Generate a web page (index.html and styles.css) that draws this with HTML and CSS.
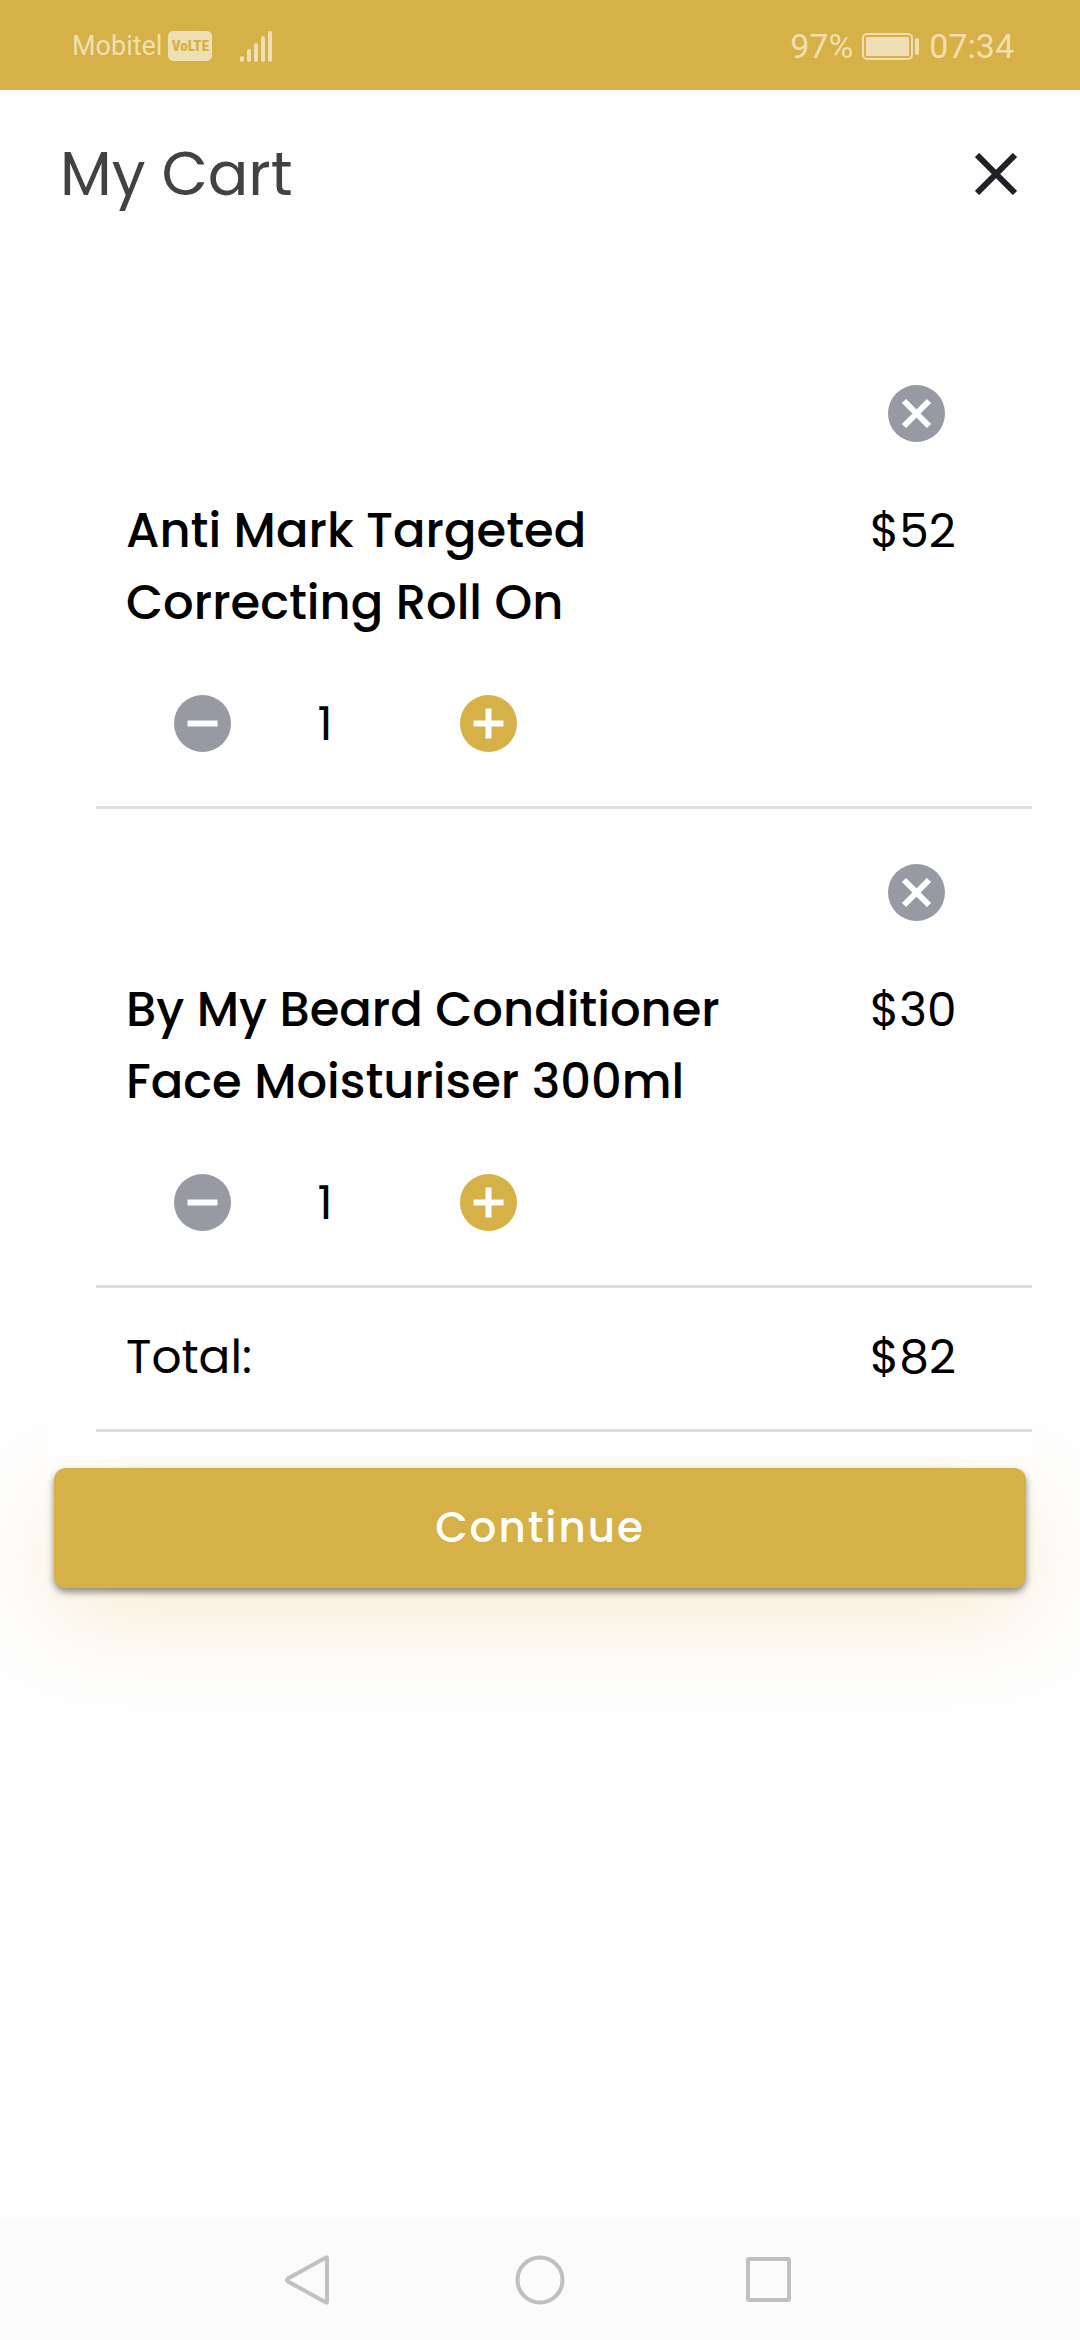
FILE: index.html
```html
<!DOCTYPE html>
<html lang="en">
<head>
<meta charset="utf-8">
<meta name="viewport" content="width=device-width, initial-scale=1">
<title>My Cart</title>
<link rel="stylesheet" href="styles.css">
</head>
<body>
<div class="status-bar">
  <div class="status-group">
    <span class="carrier">Mobitel</span>
    <span class="volte">VoLTE</span>
    <svg class="signal" width="32" height="31" viewBox="0 0 32 31" aria-hidden="true">
      <rect x="0" y="25" width="4" height="6" rx="2"/>
      <rect x="7" y="18" width="4" height="13" rx="2"/>
      <rect x="14" y="12" width="4" height="19" rx="2"/>
      <rect x="21" y="5" width="4" height="26" rx="2"/>
      <rect x="28" y="0" width="4" height="31" rx="2"/>
    </svg>
  </div>
  <div class="status-group status-right">
    <span>97%</span>
    <svg width="58" height="27" viewBox="0 0 58 27" aria-hidden="true">
      <rect class="battery-shell" x="1" y="1" width="49" height="25" rx="4"/>
      <rect x="4" y="4" width="43" height="19" rx="1"/>
      <rect x="53" y="5" width="4" height="17" rx="2"/>
    </svg>
    <span>07:34</span>
  </div>
</div>

<header class="header">
  <h1 class="title">My Cart</h1>
  <button class="icon-button close" type="button" aria-label="Close">
    <svg width="42" height="42" viewBox="0 0 42 42"><path d="M2 2L40 40M40 2L2 40"/></svg>
  </button>
</header>

<main class="main">
  <div class="cart">
    <ul class="items">
      <li class="item">
        <button class="icon-button remove" type="button" aria-label="Remove Anti Mark Targeted Correcting Roll On">
          <svg width="57" height="57" viewBox="0 0 57 57"><circle class="disc" cx="28.500" cy="28.500" r="28.500"/><path d="M16 16L41 41M41 16L16 41"/></svg>
        </button>
        <h2 class="name">Anti Mark Targeted Correcting Roll On</h2>
        <span class="price">$52</span>
        <div class="quantity">
          <button class="icon-button" type="button" aria-label="Decrease quantity">
            <svg width="57" height="57" viewBox="0 0 57 57"><circle class="disc" cx="28.500" cy="28.500" r="28.500"/><path d="M13.500 28.500H43.500"/></svg>
          </button>
          <output class="count">1</output>
          <button class="icon-button add" type="button" aria-label="Increase quantity">
            <svg width="57" height="57" viewBox="0 0 57 57"><circle class="disc" cx="28.500" cy="28.500" r="28.500"/><path d="M13.500 28.500H43.500M28.500 13.500V43.500"/></svg>
          </button>
        </div>
      </li>
      <li class="item">
        <button class="icon-button remove" type="button" aria-label="Remove By My Beard Conditioner Face Moisturiser 300ml">
          <svg width="57" height="57" viewBox="0 0 57 57"><circle class="disc" cx="28.500" cy="28.500" r="28.500"/><path d="M16 16L41 41M41 16L16 41"/></svg>
        </button>
        <h2 class="name">By My Beard Conditioner Face Moisturiser 300ml</h2>
        <span class="price">$30</span>
        <div class="quantity">
          <button class="icon-button" type="button" aria-label="Decrease quantity">
            <svg width="57" height="57" viewBox="0 0 57 57"><circle class="disc" cx="28.500" cy="28.500" r="28.500"/><path d="M13.500 28.500H43.500"/></svg>
          </button>
          <output class="count">1</output>
          <button class="icon-button add" type="button" aria-label="Increase quantity">
            <svg width="57" height="57" viewBox="0 0 57 57"><circle class="disc" cx="28.500" cy="28.500" r="28.500"/><path d="M13.500 28.500H43.500M28.500 13.500V43.500"/></svg>
          </button>
        </div>
      </li>
    </ul>
    <div class="total">
      <span>Total:</span>
      <span class="price">$82</span>
    </div>
  </div>
  <button class="continue" type="button">Continue</button>
</main>

<nav class="nav-bar" aria-label="System">
  <button class="icon-button" type="button" aria-label="Back">
    <svg width="50" height="50" viewBox="0 0 50 50"><path d="M41 2.500Q42 2 42 4V46Q42 48 41 47.500L3 26.500Q1 25 3 23.500Z"/></svg>
  </button>
  <button class="icon-button" type="button" aria-label="Home">
    <svg width="50" height="50" viewBox="0 0 50 50"><circle cx="25" cy="25" r="22.500"/></svg>
  </button>
  <button class="icon-button" type="button" aria-label="Recent apps">
    <svg width="50" height="50" viewBox="0 0 50 50"><rect x="3" y="4" width="41" height="41" rx="1"/></svg>
  </button>
</nav>
</body>
</html>
```
FILE: styles.css
```css
* {
  box-sizing: border-box;
}

body {
  display: flex;
  flex-direction: column;
  min-height: 100vh;
  margin: 0;
  background: #fefefe;
  color: #000;
  font-family: Poppins, Inter, sans-serif;
  font-size: 47px;
  line-height: 72px;
}

svg {
  display: block;
}

.status-bar {
  display: flex;
  align-items: center;
  justify-content: space-between;
  height: 90px;
  padding: 2px 66px 0 72px;
  background: #d5b148;
  color: #f3dfae;
  font-family: Roboto, sans-serif;
  font-size: 34px;
  line-height: 40px;
}

.status-bar svg {
  fill: #f0deb5;
}

.status-bar .battery-shell {
  fill: none;
  stroke: #f0deb5;
  stroke-width: 2px;
}

.status-group {
  display: flex;
  align-items: center;
  gap: 6px;
}

.status-right {
  gap: 9px;
}

.carrier {
  font-size: 27px;
}

.volte {
  width: 44px;
  border-radius: 5px;
  background: #f0deb5;
  color: #d5b148;
  font-family: "Roboto Condensed", "Open Sans Condensed", Roboto, sans-serif;
  font-size: 15px;
  font-weight: 900;
  line-height: 30px;
  text-align: center;
}

.signal {
  margin-left: 22px;
}

.header {
  display: flex;
  align-items: center;
  justify-content: space-between;
  height: 168px;
  padding: 0 63px 0 60px;
}

.title {
  margin: 0;
  color: #424242;
  font-size: 60px;
  font-weight: 400;
}

.icon-button {
  flex: none;
  padding: 0;
  border: 0;
  background: none;
  cursor: pointer;
}

.icon-button path {
  fill: none;
  stroke: #fff;
  stroke-width: 6px;
}

.icon-button .disc {
  fill: #979aa2;
}

.add .disc {
  fill: #d5b148;
}

.close path {
  stroke: #202027;
}

.main {
  display: flex;
  flex-direction: column;
  padding-top: 72px;
}

.cart {
  z-index: 1;
  margin: 0 48px;
  padding: 0 0 24px 48px;
  background: #fefefe;
}

.items {
  margin: 0;
  padding: 0;
  list-style: none;
}

.item {
  display: grid;
  grid-template-columns: 1fr 162px;
  padding: 55px 0 54px 30px;
  border-bottom: 3px solid #dedede;
}

.remove {
  grid-column: 2;
  justify-self: start;
  margin: 0 0 53px 18px;
}

.name {
  grid-column: 1;
  margin: 0;
  padding-right: 120px;
  font-size: 48px;
  font-weight: 500;
}

.quantity {
  display: flex;
  align-items: center;
  height: 57px;
  margin: 56px 0 0 48px;
}

.count {
  width: 188px;
  margin-right: 41px;
  text-align: center;
}

.total {
  display: grid;
  grid-template-columns: 1fr 162px;
  padding: 33px 0 36px 30px;
  border-bottom: 3px solid #dedede;
}

.continue {
  height: 120px;
  margin: 12px 54px 0;
  border: 0;
  border-radius: 12px;
  background: #d5b148;
  box-shadow: 0 4px 7px rgba(0, 0, 0, 0.45), 0 30px 90px rgba(225, 165, 40, 0.2);
  color: #fff;
  font: inherit;
  font-size: 42px;
  font-weight: 500;
  letter-spacing: 2px;
  cursor: pointer;
}

.nav-bar {
  display: flex;
  align-items: center;
  justify-content: center;
  gap: 180px;
  height: 121px;
  margin-top: auto;
  background: #fbfbfb;
}

.nav-bar svg {
  fill: none;
  stroke: #c0c0c0;
  stroke-width: 4px;
}

.nav-bar path {
  stroke: #c0c0c0;
  stroke-width: 4px;
}
```
